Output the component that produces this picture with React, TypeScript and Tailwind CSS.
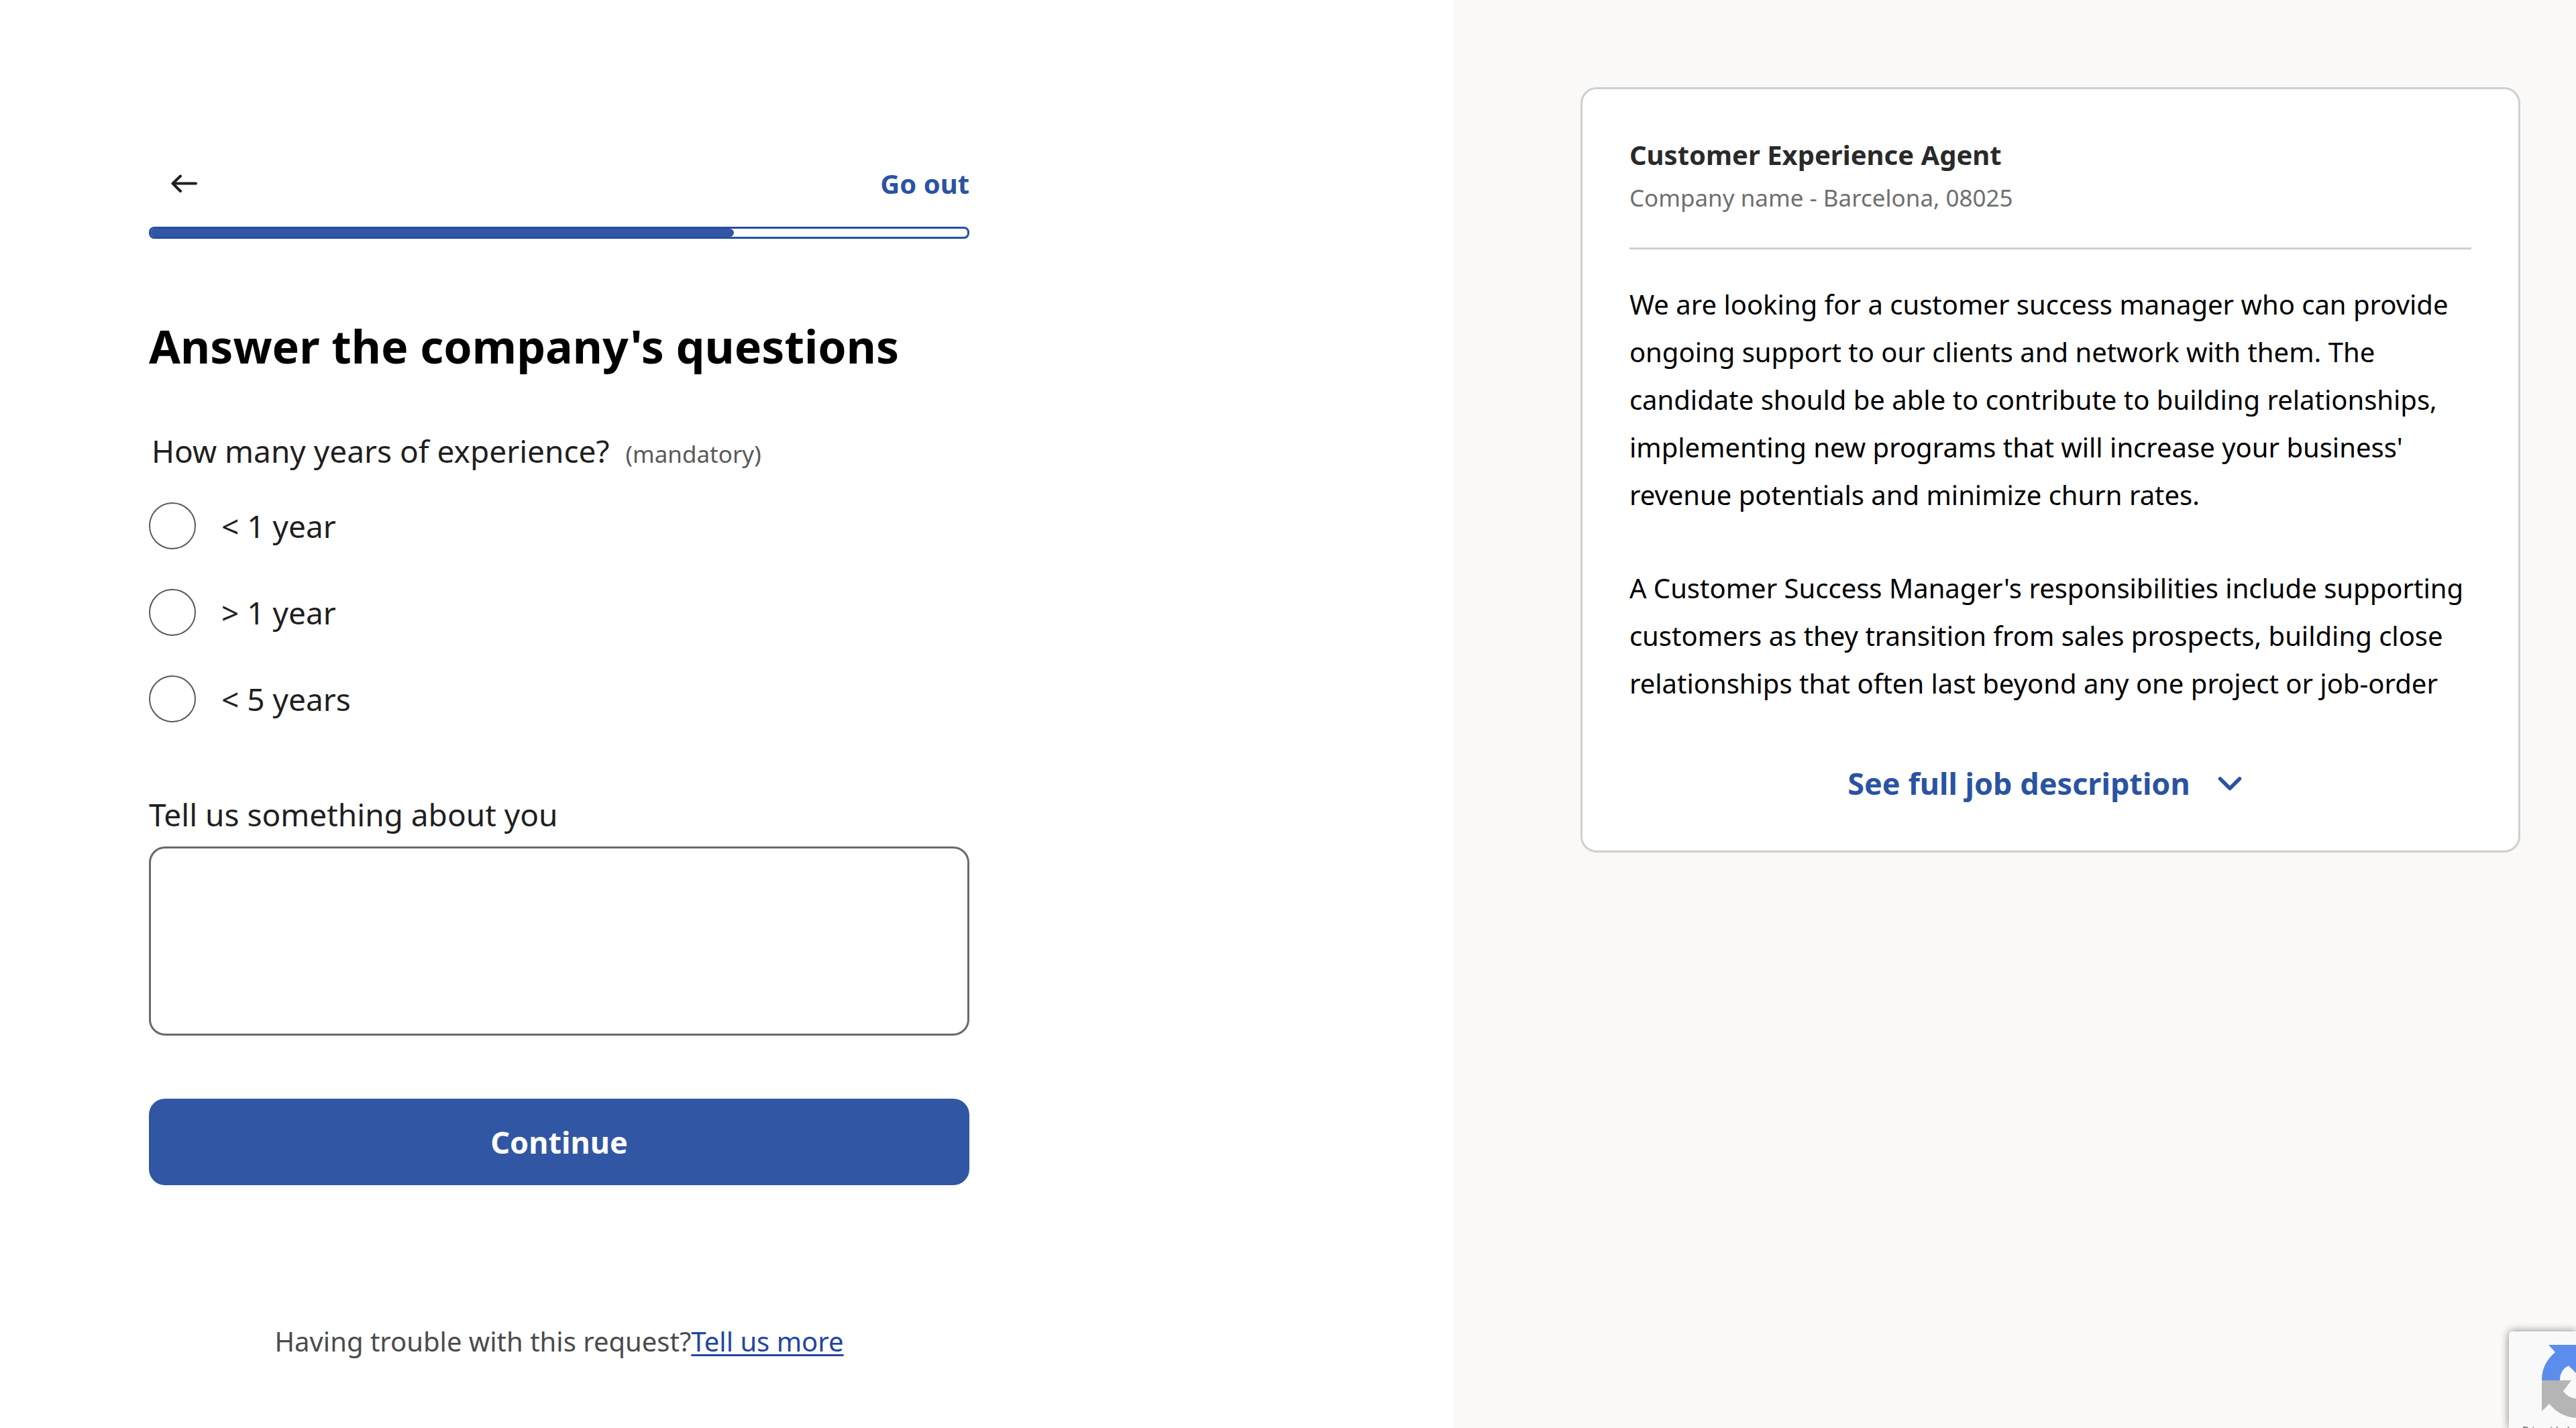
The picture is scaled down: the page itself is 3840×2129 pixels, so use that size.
import { useState } from 'react';

const experienceOptions = [
  { value: 'lt1', label: '< 1 year' },
  { value: 'gt1', label: '> 1 year' },
  { value: 'lt5', label: '< 5 years' },
];

const jobParagraphs = [
  "We are looking for a customer success manager who can provide ongoing support to our clients and network with them. The candidate should be able to contribute to building relationships, implementing new programs that will increase your business' revenue potentials and minimize churn rates.",
  "A Customer Success Manager's responsibilities include supporting customers as they transition from sales prospects, building close relationships that often last beyond any one project or job-order",
];

function ArrowLeftIcon() {
  return (
    <svg className="h-7 w-10" viewBox="0 0 40 28" fill="none" stroke="#1f1f1f" strokeWidth="4" strokeLinecap="round" strokeLinejoin="round" aria-hidden="true">
      <path d="M37 13.5H3" />
      <path d="M14 2.5 2.5 13.5l11.5 11.5" />
    </svg>
  );
}

function ChevronDownIcon() {
  return (
    <svg className="h-6 w-9" viewBox="0 0 36 24" fill="none" stroke="currentColor" strokeWidth="5.5" strokeLinecap="round" strokeLinejoin="round" aria-hidden="true">
      <path d="m3.5 5 14.5 14.5 14.5-14.5" />
    </svg>
  );
}

function ProgressBar({ step, total }: { step: number; total: number }) {
  return (
    <div
      role="progressbar"
      aria-valuenow={step}
      aria-valuemin={0}
      aria-valuemax={total}
      aria-label="Application progress"
      className="mt-9 h-[18px] overflow-hidden rounded-lg border-3 border-[#254fa3] bg-white"
    >
      <div className="h-full rounded-r-md bg-[#3156a3]" style={{ width: `${(step / total) * 100}%` }} />
    </div>
  );
}

function ApplicationForm() {
  const [experience, setExperience] = useState('');
  return (
    <main className="w-[56.43%] pl-[222px] pt-[246px]">
      <form className="max-w-[1223px]" onSubmit={(e) => e.preventDefault()}>
        <div className="flex items-center justify-between">
          <button type="button" aria-label="Back" className="flex h-14 w-[106px] items-center justify-center">
            <ArrowLeftIcon />
          </button>
          <a href="#" className="text-[40px] font-bold leading-14 text-[#2a53a3]">Go out</a>
        </div>
        <ProgressBar step={5} total={7} />

        <h1 className="mt-[116px] whitespace-nowrap text-[68px] font-bold leading-[88px] text-black">
          Answer the company's questions
        </h1>

        <fieldset className="mt-20">
          <legend className="flex items-baseline gap-6 pl-1 text-[46px] leading-16">
            How many years of experience?
            <span className="text-[35px] text-[#595959]">(mandatory)</span>
          </legend>
          <div className="mt-10 flex flex-col gap-[59px]">
            {experienceOptions.map((option) => (
              <label key={option.value} className="flex items-center gap-[38px] text-[46px] leading-[70px]">
                <input
                  type="radio"
                  name="experience"
                  value={option.value}
                  checked={experience === option.value}
                  onChange={() => setExperience(option.value)}
                  className="size-[70px] shrink-0 appearance-none rounded-full border-2 border-[#595959] bg-white checked:border-[20px] checked:border-[#3156a3]"
                />
                {option.label}
              </label>
            ))}
          </div>
        </fieldset>

        <label htmlFor="about" className="mt-[105px] block text-[46px] leading-16">
          Tell us something about you
        </label>
        <textarea
          id="about"
          className="mt-4 block h-[282px] w-full resize-none rounded-3xl border-3 border-[#6a6a6a] bg-white px-8 py-6 text-[46px] leading-16"
        />

        <button
          type="submit"
          className="mt-[94px] h-[129px] w-full rounded-3xl bg-[#3156a3] text-[45px] font-bold text-white"
        >
          Continue
        </button>

        <p className="mt-[205px] text-center text-[40px] leading-14 text-[#4b4b4b]">
          Having trouble with this request?
          <a href="#" className="text-[#2346a0] underline decoration-3 underline-offset-4">Tell us more</a>
        </p>
      </form>
    </main>
  );
}

function JobCard() {
  return (
    <aside className="flex-1 bg-[#faf9f8] pl-[189px] pr-[83px] pt-[130px]">
      <article className="rounded-3xl border-3 border-[#d0cfce] bg-white p-[70px]">
        <header className="border-b-3 border-[#d0cfce] pb-[50px]">
          <h2 className="text-[40px] font-bold leading-14 text-[#2a2a2a]">Customer Experience Agent</h2>
          <p className="mt-3 text-[35px] leading-12 text-[#6f6f6f]">Company name - Barcelona, 08025</p>
        </header>
        <div className="mt-[46px] flex flex-col gap-[68px] text-[40px] leading-[71px] text-black">
          {jobParagraphs.map((text) => (
            <p key={text}>{text}</p>
          ))}
        </div>
        <button
          type="button"
          className="mx-auto mt-[84px] flex items-center gap-6 text-[45px] font-bold leading-15 text-[#2a53a3]"
        >
          See full job description
          <span className="flex w-[70px] justify-center">
            <ChevronDownIcon />
          </span>
        </button>
      </article>
    </aside>
  );
}

function RecaptchaBadge() {
  return (
    <div className="fixed bottom-0 right-0 h-36 w-[100px] overflow-hidden rounded-tl-[5px] bg-[#f9f9f9] pt-[19px] shadow-[0_0_13px_#808080]">
      <svg className="ml-auto h-[112px] w-[51px]" viewBox="0 0 51 112" aria-hidden="true">
        <path d="M10 1H51V43L40 32C32 36 27 43 27 54H0C0 36 7 23 20 12Z" fill="#5c8ded" />
        <path d="M0 54H44L32 70C37 77 44 81 51 81V110C35 109 21 101 11 89L0 100Z" fill="#b5b5b5" />
      </svg>
      <p className="ml-5 mt-[7px] text-[15px] leading-5 text-[#555555] font-['Roboto',sans-serif]">Privacidad</p>
    </div>
  );
}

export default function App() {
  return (
    <div className="flex min-h-screen bg-white font-['Noto_Sans',sans-serif] text-[#1f1f1f]">
      <ApplicationForm />
      <JobCard />
      <RecaptchaBadge />
    </div>
  );
}
